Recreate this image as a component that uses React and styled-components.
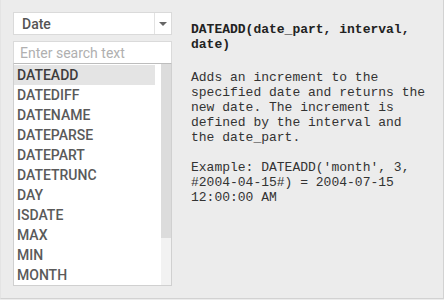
import React from "react";
import styled, { createGlobalStyle } from "styled-components";

const Global = createGlobalStyle`
  html, body { margin: 0; padding: 0; background: #ececec; }
`;

const Frame = styled.div`
  box-sizing: border-box;
  width: 444px;
  height: 299px;
  background: #ececec;
  border-left: 1px solid #e4e4e4;
  border-right: 1px solid #d2d2d2;
  border-bottom: 1px solid #d2d2d2;
  display: flex;
  align-items: flex-start;
  padding: 12px 0 0 12px;
  overflow: hidden;
`;

const LeftCol = styled.div`
  width: 159px;
  display: flex;
  flex-direction: column;
`;

const Select = styled.div`
  box-sizing: border-box;
  height: 23px;
  background: #fff;
  border: 1px solid #dadada;
  display: flex;
  align-items: center;
  font-family: Roboto, "Liberation Sans", sans-serif;
  font-size: 14px;
  font-weight: 500;
  color: #555;
`;

const SelectLabel = styled.div`
  flex: 1;
  padding-left: 8px;
`;

const SelectButton = styled.div`
  width: 16px;
  height: 100%;
  border-left: 1px solid #e2e2e2;
  display: flex;
  align-items: center;
  justify-content: center;
`;

const Arrow = styled.div`
  width: 0;
  height: 0;
  border-left: 4px solid transparent;
  border-right: 4px solid transparent;
  border-top: 4px solid #666;
`;

const Search = styled.div`
  box-sizing: border-box;
  margin-top: 6px;
  height: 23px;
  background: #fff;
  border: 1px solid #dadada;
  border-bottom-color: #bdbdbd;
  display: flex;
  align-items: center;
  padding-left: 6px;
  font-family: Roboto, "Liberation Sans", sans-serif;
  font-size: 14px;
  color: #b0b0b0;
`;

const List = styled.div`
  box-sizing: border-box;
  height: 222px;
  background: #fff;
  border: 1px solid #d0d0d0;
  border-top: none;
  display: flex;
  overflow: hidden;
`;

const Rows = styled.div`
  width: 141px;
  padding-top: 1px;
`;

const Row = styled.div`
  height: 20px;
  line-height: 20px;
  padding-left: 3px;
  font-family: Roboto, "Liberation Sans", sans-serif;
  font-size: 14px;
  font-weight: 500;
  color: ${(p) => (p.$active ? "#3d3d3d" : "#5a5a5a")};
  background: ${(p) => (p.$active ? "#e4e4e4" : "transparent")};
  white-space: nowrap;
`;

const Track = styled.div`
  margin-left: 6px;
  width: 10px;
  background: #f2f2f2;
  display: flex;
  flex-direction: column;
`;

const Thumb = styled.div`
  height: 174px;
  background: #dcdcdc;
`;

const RightCol = styled.div`
  margin-left: 19px;
  margin-top: 10px;
  width: 238px;
  font-family: "Liberation Mono", "Courier New", monospace;
  font-size: 13px;
  line-height: 15px;
  color: #333;
`;

const Title = styled.div`
  font-weight: bold;
  color: #222;
`;

const Para = styled.div`
  margin-top: ${(p) => p.$gap}px;
`;

const items = [
  "DATEADD",
  "DATEDIFF",
  "DATENAME",
  "DATEPARSE",
  "DATEPART",
  "DATETRUNC",
  "DAY",
  "ISDATE",
  "MAX",
  "MIN",
  "MONTH",
];

export default function App() {
  return (
    <>
      <Global />
      <Frame>
        <LeftCol>
          <Select>
            <SelectLabel>Date</SelectLabel>
            <SelectButton>
              <Arrow />
            </SelectButton>
          </Select>
          <Search>Enter search text</Search>
          <List>
            <Rows>
              {items.map((it, i) => (
                <Row key={it} $active={i === 0}>
                  {it}
                </Row>
              ))}
            </Rows>
            <Track>
              <Thumb />
            </Track>
          </List>
        </LeftCol>
        <RightCol>
          <Title>DATEADD(date_part, interval, date)</Title>
          <Para $gap={18}>
            Adds an increment to the specified date and returns the new date.
            The increment is defined by the interval and the date_part.
          </Para>
          <Para $gap={15}>
            Example: DATEADD('month', 3, #2004-04-15#) = 2004-07-15 12:00:00 AM
          </Para>
        </RightCol>
      </Frame>
    </>
  );
}
